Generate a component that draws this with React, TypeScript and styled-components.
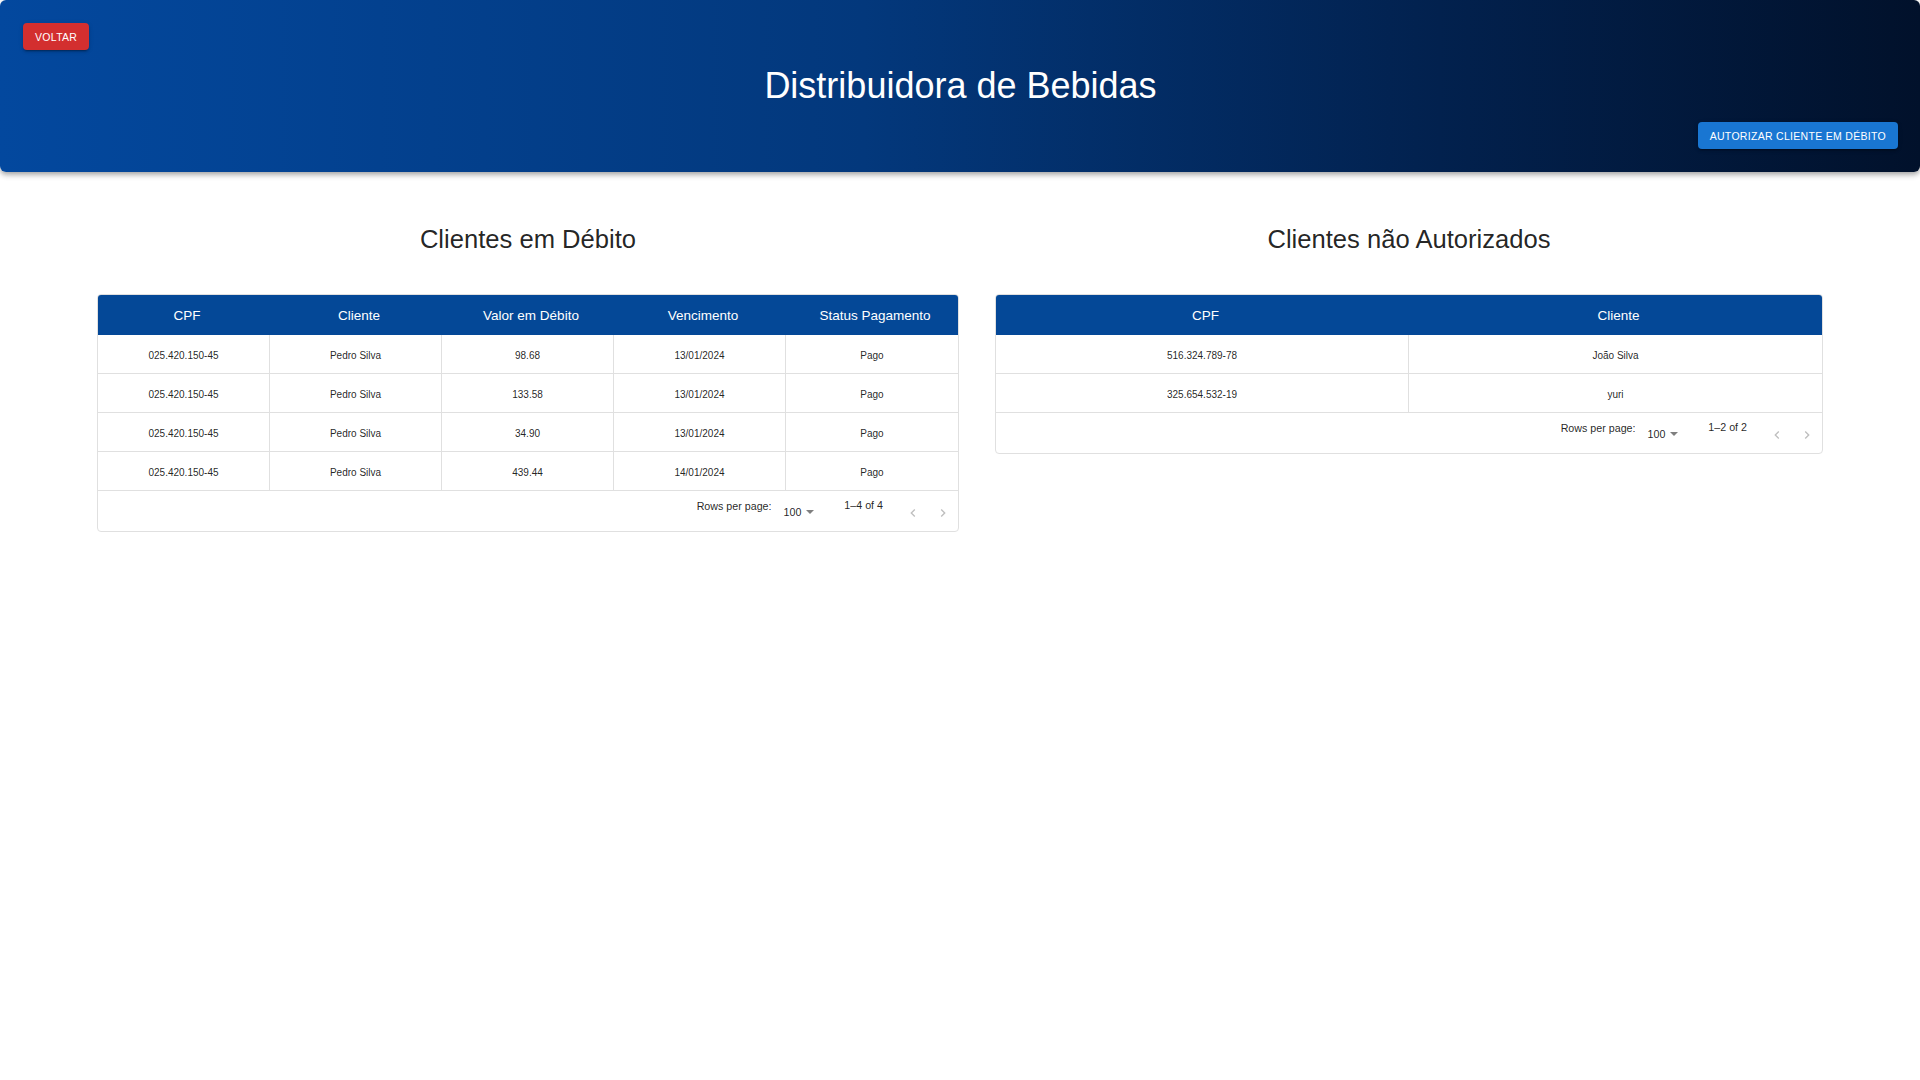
import React, { FunctionComponent } from 'react';
import styled, { createGlobalStyle } from 'styled-components';

const GlobalStyle = createGlobalStyle`
    body {
        margin: 0;
        background: #ffffff;
        font-family: 'Liberation Sans', Arial, sans-serif;
        color: rgba(0, 0, 0, 0.87);
    }
`;

const StyledHeader = styled.header`
    display: flex;
    flex-direction: column;
    height: 172px;
    box-sizing: border-box;
    padding: 23px 22px 23px 23px;
    border-radius: 6px;
    background: linear-gradient(90deg, #03489e 0%, #03387c 45%, #02214e 75%, #01112b 100%);
    box-shadow: 0 2px 4px -1px rgba(0, 0, 0, 0.2), 0 4px 5px 0 rgba(0, 0, 0, 0.14),
        0 1px 10px 0 rgba(0, 0, 0, 0.12);
`;

const StyledHeaderRow = styled.div<{ align: 'start' | 'end' }>`
    display: flex;
    justify-content: ${({ align }) => (align === 'start' ? 'flex-start' : 'flex-end')};
`;

const StyledTitle = styled.h1`
    margin: 15px 0 15px;
    font-size: 36px;
    line-height: 42px;
    font-weight: 400;
    color: #ffffff;
    text-align: center;
`;

const StyledButton = styled.button<{ tone: 'error' | 'primary' }>`
    height: 27px;
    padding: 0 12px;
    border: none;
    border-radius: 4px;
    font-family: 'Liberation Sans', Arial, sans-serif;
    font-size: 10.5px;
    letter-spacing: 0.3px;
    text-transform: uppercase;
    color: #ffffff;
    cursor: pointer;
    background: ${({ tone }) => (tone === 'error' ? '#d32f2f' : '#1976d2')};
    box-shadow: 0 3px 1px -2px rgba(0, 0, 0, 0.2), 0 2px 2px 0 rgba(0, 0, 0, 0.14),
        0 1px 5px 0 rgba(0, 0, 0, 0.12);
`;

const StyledMain = styled.main`
    display: grid;
    grid-template-columns: 862px 828px;
    column-gap: 36px;
    justify-content: center;
    align-items: start;
    padding-top: 52px;
`;

const StyledSection = styled.section`
    display: flex;
    flex-direction: column;
`;

const StyledSectionTitle = styled.h2`
    margin: 0 0 39px;
    font-size: 25.6px;
    line-height: 30.7px;
    font-weight: 400;
    text-align: center;
    color: rgba(0, 0, 0, 0.87);
`;

const StyledTable = styled.div`
    border: 1px solid #e0e0e0;
    border-radius: 4px;
    overflow: hidden;
`;

const StyledRow = styled.div<{ cols: number; head?: boolean }>`
    display: grid;
    grid-template-columns: repeat(${({ cols }) => cols}, 1fr);
    height: ${({ head }) => (head ? '40px' : '39px')};
    box-sizing: border-box;
    background: ${({ head }) => (head ? '#044897' : '#ffffff')};
    border-bottom: ${({ head }) => (head ? 'none' : '1px solid #e0e0e0')};
`;

const StyledHeadCell = styled.div`
    display: flex;
    align-items: center;
    justify-content: center;
    padding: 1px 0 0 6px;
    font-size: 13.5px;
    color: #ffffff;
`;

const StyledCell = styled.div`
    display: flex;
    align-items: center;
    justify-content: center;
    padding-top: 4px;
    box-sizing: border-box;
    font-size: 10px;
    color: rgba(0, 0, 0, 0.87);
    border-right: 1px solid #e0e0e0;

    &:last-child {
        border-right: none;
    }
`;

const StyledFooter = styled.div`
    display: flex;
    justify-content: flex-end;
    align-items: flex-start;
    height: 40px;
    padding-right: 7px;
    font-size: 10.7px;
    line-height: 14px;
    color: rgba(0, 0, 0, 0.87);
`;

const StyledLabel = styled.span`
    margin-top: 8px;
`;

const StyledSelect = styled.div`
    display: flex;
    align-items: center;
    gap: 5px;
    margin: 14px 30px 0 12px;
`;

const StyledCount = styled.span`
    margin-top: 7px;
`;

const StyledActions = styled.div`
    display: flex;
    gap: 14px;
    margin: 14px 0 0 22px;
`;

const ArrowDrop = () => (
    <svg width='8' height='4' viewBox='0 0 8 4'>
        <path d='M0 0h8L4 4z' fill='rgba(0,0,0,0.5)' />
    </svg>
);

const ChevronLeft = () => (
    <svg width='16' height='16' viewBox='0 0 24 24'>
        <path d='M15.41 16.59 10.83 12l4.58-4.59L14 6l-6 6 6 6z' fill='rgba(0,0,0,0.26)' />
    </svg>
);

const ChevronRight = () => (
    <svg width='16' height='16' viewBox='0 0 24 24'>
        <path d='M8.59 16.59 13.17 12 8.59 7.41 10 6l6 6-6 6z' fill='rgba(0,0,0,0.26)' />
    </svg>
);

interface IDataTable {
    readonly columns: string[];
    readonly rows: string[][];
}

const DataTable: FunctionComponent<IDataTable> = ({ columns, rows }) => (
    <StyledTable>
        <StyledRow cols={columns.length} head>
            {columns.map((column) => (
                <StyledHeadCell key={column}>{column}</StyledHeadCell>
            ))}
        </StyledRow>
        {rows.map((row, i) => (
            <StyledRow cols={columns.length} key={i}>
                {row.map((value, j) => (
                    <StyledCell key={j}>{value}</StyledCell>
                ))}
            </StyledRow>
        ))}
        <StyledFooter>
            <StyledLabel>Rows per page:</StyledLabel>
            <StyledSelect>
                <span>100</span>
                <ArrowDrop />
            </StyledSelect>
            <StyledCount>
                1–{rows.length} of {rows.length}
            </StyledCount>
            <StyledActions>
                <ChevronLeft />
                <ChevronRight />
            </StyledActions>
        </StyledFooter>
    </StyledTable>
);

const debtRows = [
    ['025.420.150-45', 'Pedro Silva', '98.68', '13/01/2024', 'Pago'],
    ['025.420.150-45', 'Pedro Silva', '133.58', '13/01/2024', 'Pago'],
    ['025.420.150-45', 'Pedro Silva', '34.90', '13/01/2024', 'Pago'],
    ['025.420.150-45', 'Pedro Silva', '439.44', '14/01/2024', 'Pago'],
];

const unauthorizedRows = [
    ['516.324.789-78', 'João Silva'],
    ['325.654.532-19', 'yuri'],
];

const App: FunctionComponent = () => (
    <>
        <GlobalStyle />
        <StyledHeader>
            <StyledHeaderRow align='start'>
                <StyledButton tone='error'>Voltar</StyledButton>
            </StyledHeaderRow>
            <StyledTitle>Distribuidora de Bebidas</StyledTitle>
            <StyledHeaderRow align='end'>
                <StyledButton tone='primary'>Autorizar cliente em débito</StyledButton>
            </StyledHeaderRow>
        </StyledHeader>
        <StyledMain>
            <StyledSection>
                <StyledSectionTitle>Clientes em Débito</StyledSectionTitle>
                <DataTable
                    columns={['CPF', 'Cliente', 'Valor em Débito', 'Vencimento', 'Status Pagamento']}
                    rows={debtRows}
                />
            </StyledSection>
            <StyledSection>
                <StyledSectionTitle>Clientes não Autorizados</StyledSectionTitle>
                <DataTable columns={['CPF', 'Cliente']} rows={unauthorizedRows} />
            </StyledSection>
        </StyledMain>
    </>
);

export default App;
